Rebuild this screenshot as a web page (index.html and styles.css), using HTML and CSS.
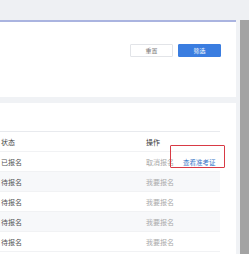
FILE: index.html
```html
<!DOCTYPE html>
<html lang="zh-CN">
<head>
    <meta charset="UTF-8">
    <meta name="viewport" content="width=device-width, initial-scale=1.0">
    <title>报名列表</title>
    <link rel="stylesheet" href="styles.css">
</head>
<body>
    <div class="topbar"></div>
    <div class="frame">
        <div class="page">
            <div class="filter-panel">
                <div class="filter-actions">
                    <button class="btn btn-reset">重置</button>
                    <button class="btn btn-primary">筛选</button>
                </div>
            </div>

            <div class="table-panel">
                <div class="table">
                    <div class="row head">
                        <span class="col-status">状态</span>
                        <span class="col-op">操作</span>
                    </div>
                    <div class="row">
                        <span class="col-status">已报名</span>
                        <span class="col-op">
                            <span class="link-muted">取消报名</span>
                            <span class="link-blue">查看准考证</span>
                        </span>
                    </div>
                    <div class="row striped">
                        <span class="col-status">待报名</span>
                        <span class="col-op"><span class="link-muted">我要报名</span></span>
                    </div>
                    <div class="row">
                        <span class="col-status">待报名</span>
                        <span class="col-op"><span class="link-muted">我要报名</span></span>
                    </div>
                    <div class="row striped">
                        <span class="col-status">待报名</span>
                        <span class="col-op"><span class="link-muted">我要报名</span></span>
                    </div>
                    <div class="row">
                        <span class="col-status">待报名</span>
                        <span class="col-op"><span class="link-muted">我要报名</span></span>
                    </div>
                </div>
                <!-- 标注框 -->
                <div class="highlight"></div>
            </div>
        </div>
        <div class="scrollbar"></div>
    </div>
</body>
</html>
```

FILE: styles.css
```css
body {
    margin: 0;
    font-family: "Noto Sans CJK SC", "Noto Sans", sans-serif;
    font-size: 7px;
    color: #555;
    background-color: #eef0f3;
    overflow: hidden;
}

.topbar {
    height: 20px;
    background-color: #eef0f3;
}

.frame {
    display: flex;
    height: 234px;
    overflow: hidden;
}

.page {
    flex: 1;
    background-color: #f0f2f5;
    padding-right: 4px;
}

.scrollbar {
    width: 9px;
    background-color: #a3a3a3;
}

.filter-panel {
    height: 75px;
    background-color: white;
    border-top: 2px solid #aab4e0;
    padding-right: 15px;
}

.filter-actions {
    display: flex;
    justify-content: flex-end;
    gap: 5px;
    padding-top: 22px;
}

.btn {
    width: 43px;
    height: 13px;
    padding: 0;
    font-family: inherit;
    font-size: 6px;
    border-radius: 1px;
    cursor: pointer;
}

.btn-reset {
    background-color: white;
    border: 1px solid #e2e4e8;
    color: #777;
}

.btn-primary {
    background-color: #3a7de0;
    border: 1px solid #3a7de0;
    color: white;
}

.table-panel {
    position: relative;
    margin-top: 6px;
    background-color: white;
    padding: 28px 16px 20px 0;
}

.table {
    border-top: 1px solid #e8eaee;
}

.row {
    display: flex;
    align-items: center;
    height: 19px;
    border-bottom: 1px solid #f1f2f4;
}

.row.head {
    color: #444;
}

.row.striped {
    background-color: #f7f8fa;
}

.col-status {
    width: 145px;
    padding-left: 1px;
}

.col-op {
    display: flex;
    gap: 9px;
}

.row.head .col-op {
    color: #333;
}

.link-muted {
    color: #aaa;
}

.link-blue {
    color: #3a78c8;
    font-size: 6.5px;
}

.highlight {
    position: absolute;
    left: 170px;
    top: 42px;
    width: 53px;
    height: 21px;
    border: 1.5px solid #d83a45;
    border-radius: 1px;
}
```
